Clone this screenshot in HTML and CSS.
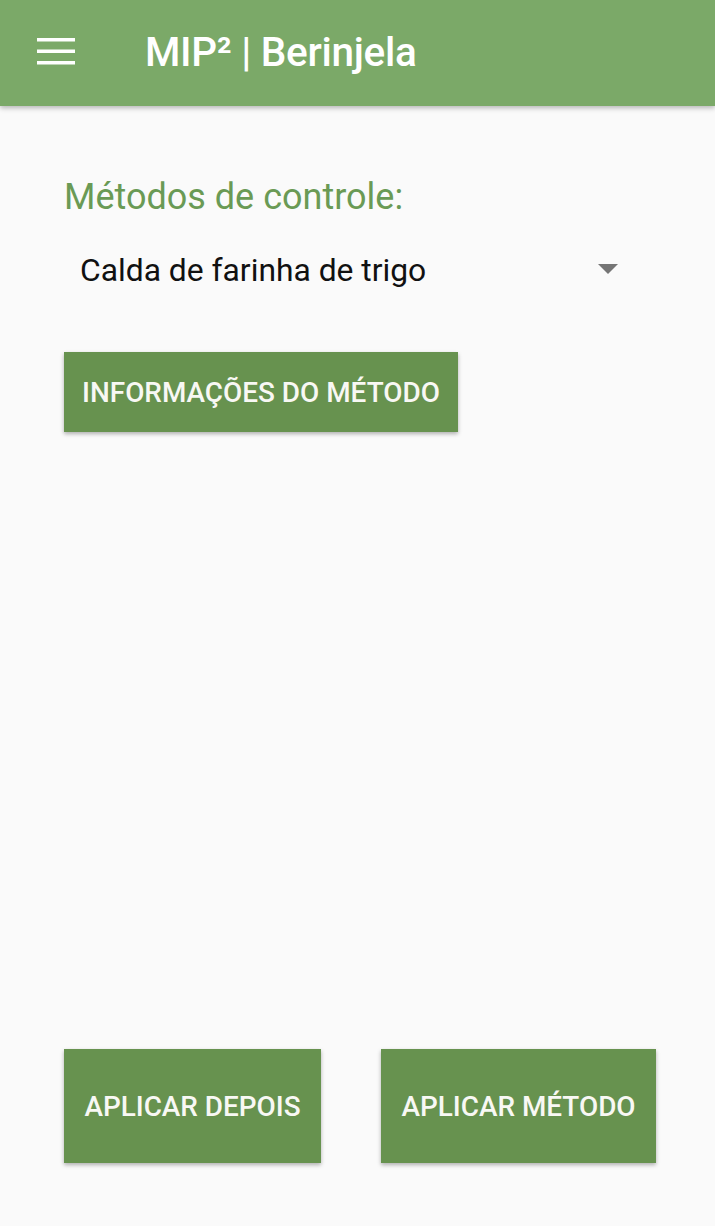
FILE: index.html
```html
<!DOCTYPE html>
<html lang="pt">
<head>
<meta charset="utf-8">
<link rel="stylesheet" href="styles.css">
</head>
<body>
<div class="app">
  <header class="topbar">
    <button class="menu-btn" aria-label="menu">
      <svg width="38" height="28" viewBox="0 0 38 28"><rect x="0" y="1" width="38" height="3.5" fill="#fff"/><rect x="0" y="12.5" width="38" height="3.5" fill="#fff"/><rect x="0" y="24" width="38" height="3.5" fill="#fff"/></svg>
    </button>
    <h1 class="title">MIP² | Berinjela</h1>
  </header>
  <main class="content">
    <label class="field-label">Métodos de controle:</label>
    <div class="select">
      <span class="select-value">Calda de farinha de trigo</span>
      <span class="select-arrow"></span>
    </div>
    <div class="info-row">
      <button class="btn btn-info">INFORMAÇÕES DO MÉTODO</button>
    </div>
  </main>
  <footer class="actions">
    <button class="btn btn-action btn-later">APLICAR DEPOIS</button>
    <button class="btn btn-action btn-apply">APLICAR MÉTODO</button>
  </footer>
</div>
</body>
</html>
```

FILE: styles.css
```css
* { box-sizing: border-box; }
html, body { margin: 0; padding: 0; }
body {
  background: #fafafa;
  font-family: Roboto, "Noto Sans", "Liberation Sans", sans-serif;
}
.app {
  min-height: 1226px;
  display: flex;
  flex-direction: column;
}
.topbar {
  height: 106px;
  background: #7ba968;
  display: flex;
  align-items: center;
  padding-left: 37px;
  box-shadow: 0 2px 5px rgba(0,0,0,0.28);
  position: relative;
  z-index: 1;
}
.menu-btn {
  background: none;
  border: 0;
  padding: 0;
  width: 38px;
  height: 28px;
  display: flex;
  margin-top: -4px;
}
.title {
  margin: -2px 0 0 70px;
  color: #fff;
  font-size: 40.5px;
  font-weight: 500;
  letter-spacing: -0.3px;
  line-height: 1;
}
.content {
  padding: 0 64px;
  display: flex;
  flex-direction: column;
}
.field-label {
  margin-top: 70px;
  color: #6a9a55;
  font-size: 36px;
  line-height: 42px;
}
.select {
  display: flex;
  align-items: center;
  justify-content: space-between;
  margin-top: 34px;
  padding-left: 16px;
  padding-right: 33px;
  height: 36px;
}
.select-value {
  font-size: 31.8px;
  color: #111;
}
.select-arrow {
  width: 0;
  height: 0;
  border-left: 10px solid transparent;
  border-right: 10px solid transparent;
  border-top: 10px solid #757575;
  margin-top: -3px;
}
.info-row {
  margin-top: 64px;
  display: flex;
}
.btn {
  border: 0;
  background: #67924f;
  color: #f8f8f4;
  font-family: Roboto, "Noto Sans", "Liberation Sans", sans-serif;
  font-weight: 500;
  font-size: 27.9px;
  letter-spacing: 0;
  box-shadow: 0 2px 4px rgba(0,0,0,0.3);
  border-radius: 0;
}
.btn-info {
  height: 80px;
  width: 394px;
  padding: 0;
}
.actions {
  margin-top: auto;
  display: flex;
  gap: 60px;
  padding: 0 59px 63px 64px;
}
.btn-action {
  height: 114px;
  padding: 0;
}
.btn-later { width: 257px; }
.btn-apply { width: 275px; }
```
